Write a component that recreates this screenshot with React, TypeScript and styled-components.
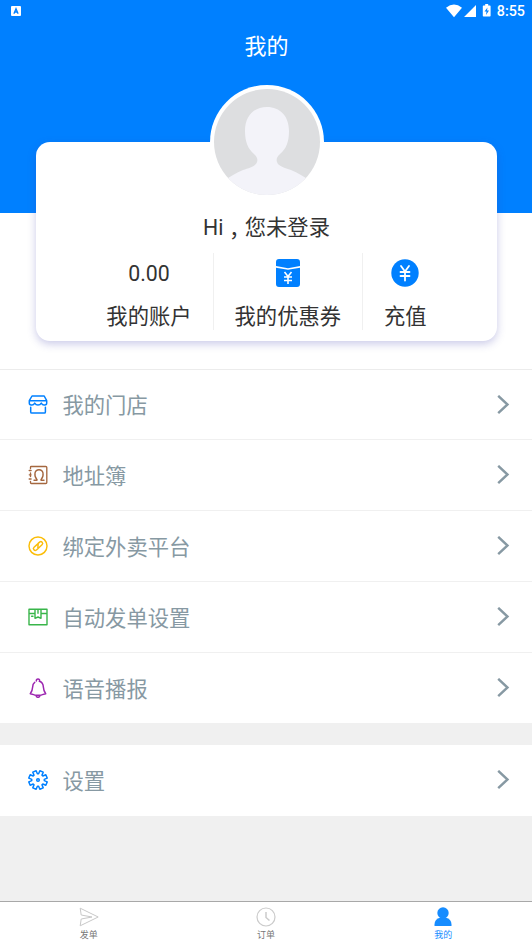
import React from "react";
import styled, { createGlobalStyle } from "styled-components";

const BLUE = "#0080ff";

const GlobalStyle = createGlobalStyle`
  * { box-sizing: border-box; }
  body {
    margin: 0;
    background: #f0f0f0;
    font-family: Roboto, "Noto Sans CJK SC", sans-serif;
  }
  svg { display: block; flex: none; }
`;

const Screen = styled.div`
  display: flex;
  flex-direction: column;
  width: 532px;
  height: 946px;
  overflow: hidden;
  background: #f0f0f0;
`;

const Header = styled.header`
  flex: none;
  height: 369px;
  background: linear-gradient(${BLUE} 213px, #fff 213px);
`;

const StatusBar = styled.div`
  display: flex;
  align-items: center;
  height: 22px;
  padding: 0 7px 0 11px;
`;

const StatusIcons = styled.div`
  display: flex;
  align-items: center;
  margin-left: auto;
`;

const Clock = styled.span`
  margin-left: 5px;
  font-size: 14.3px;
  font-weight: 500;
  line-height: 22px;
  color: #fff;
`;

const Title = styled.h1`
  margin: 0;
  height: 63px;
  padding: 9px 0 0 1px;
  font-size: 22px;
  font-weight: 400;
  line-height: 32px;
  text-align: center;
  color: #fff;
`;

const ProfileCard = styled.section`
  display: flex;
  flex-direction: column;
  align-items: center;
  width: 461px;
  height: 199px;
  margin: 57px 0 0 36px;
  border-radius: 14px;
  background: #fff;
  box-shadow: 0 3px 9px rgba(60, 60, 170, 0.27);
  color: #333;
`;

const Avatar = styled.div`
  flex: none;
  width: 114px;
  height: 114px;
  margin-top: -57px;
  padding: 4px;
  border-radius: 50%;
  background: #fff;
`;

const Greeting = styled.div`
  display: flex;
  margin-top: 13px;
  height: 32px;
  font-size: 21.3px;
  line-height: 32px;
  white-space: nowrap;
`;

const Comma = styled.span`
  padding-top: 6px;
  font-family: "Noto Sans CJK TC", sans-serif;
`;

const Stats = styled.div`
  display: flex;
  margin-top: 9px;
  height: 77px;
`;

const Stat = styled.div`
  display: flex;
  flex-direction: column;
  align-items: center;
  padding: 0 21px;
  & + & { border-left: 1px solid #f0f0f0; }
`;

const StatValue = styled.div`
  display: flex;
  flex: none;
  align-items: center;
  height: 39px;
  padding-top: 1px;
  font-size: 21.3px;
`;

const StatLabel = styled.div`
  flex: none;
  height: 32px;
  margin-top: 9px;
  font-size: 21.3px;
  line-height: 32px;
  white-space: nowrap;
`;

const Menu = styled.nav`
  flex: none;
  background: #fff;
  border-top: 1px solid #ececec;
  & + & { margin-top: 21px; border-top: 0; }
`;

const MenuRow = styled.div<{ $compact?: boolean; $last?: boolean }>`
  display: flex;
  align-items: center;
  height: ${(p) => (p.$compact ? 70 : 71)}px;
  padding: 0 22px 0 28px;
  border-bottom: 1px solid ${(p) => (p.$last ? "transparent" : "#f0f0f0")};
`;

const MenuLabel = styled.span`
  flex: 1;
  margin-left: 14.5px;
  padding-top: 3px;
  font-size: 21.3px;
  line-height: 32px;
  color: #8799a3;
`;

const TabBar = styled.footer`
  display: flex;
  flex: none;
  height: 45px;
  margin-top: auto;
  border-top: 1px solid #a8a8a8;
  background: #fff;
`;

const Tab = styled.div<{ $active?: boolean }>`
  display: flex;
  flex: 1;
  flex-direction: column;
  align-items: center;
  padding-top: 5px;
  font-size: 9px;
  line-height: 14px;
  color: ${(p) => (p.$active ? "#168cff" : "#777")};
`;

const TabLabel = styled.span`
  margin-top: 1px;
`;

function Glyph({ color, children, width = 1.35 }: { color: string; children: React.ReactNode; width?: number }) {
  return (
    <svg width="20" height="20" viewBox="0 0 20 20" fill="none" stroke={color} strokeWidth={width} strokeLinecap="round" strokeLinejoin="round">
      {children}
    </svg>
  );
}

const StoreIcon = () => (
  <Glyph color={BLUE} width={1.5}>
    <path d="M4 1h12.2l2.500 4.700H1.300zM1.300 5.700v2.200a2 2 0 0 0 1.900 2M18.700 5.700v2.200a2 2 0 0 1-1.900 2M3.200 9.900q2.200.5 3.500-1.800 1.200 2 3.300 2t3.300-2q1.300 2.300 3.500 1.800M2.700 12.200v4.700q0 1.100 1.100 1.100h12.500q1.100 0 1.100-1.100v-4.700" />
  </Glyph>
);

const AddressIcon = () => (
  <Glyph color="#a5673f" width={1.35}>
    <path d="M2.500 3.500V2.300q0-.8.800-.8h14.400q1.100 0 1.100 1.100v14.800q0 1.100-1.100 1.100H3.300q-.8 0-.8-.8v-1.200M1.200 5.500h1.900M1.200 14h1.900M2.500 8v3.500M1.300 9.800h1.800M6 15.200h2.800q.5 0 .2-.6c-2-2.100-2.400-4.300-2-6.600C7.400 6 8.900 4.700 11 4.700s3.600 1.300 4 3.300c.4 2.300 0 4.500-2 6.600q-.3.600.2.600H16" />
  </Glyph>
);

const LinkIcon = () => (
  <Glyph color="#fbbd08" width={1.45}>
    <circle cx="10" cy="10" r="9" />
    <g transform="rotate(-42 10 10)">
      <path d="M10.500 8.300H6.200a1.800 1.800 0 0 0 0 3.600h2.300M9.500 11.800h4.300a1.800 1.800 0 0 0 0-3.600h-2.300M8.700 11.200l2.600-2.400" />
    </g>
  </Glyph>
);

const PackageIcon = () => (
  <Glyph color="#39b54a" width={1.4}>
    <path d="M1 2.300h18v15.400H1zM1 6.500h6M13 6.500h6M7 2.300v9l3-1.300 3 1.300v-9M10 2.300v4M3.600 9.300h1.400" />
  </Glyph>
);

const BellIcon = () => (
  <Glyph color="#9c26b0" width={1.5}>
    <path d="M6.700 4.400C5 5.500 4.700 7.300 4.600 9.300c-.1 2.500-1 4.700-2.300 6.400l4.200 1.200q3.500.8 7 0l4.200-1.200c-1.300-1.700-2.200-3.900-2.300-6.400-.2-3.500-1.700-5.400-4-6M8.300 3q0-2 1.700-2t1.700 2M8 17.300q.3 2 2 2t2-2" />
  </Glyph>
);

const point = (radius: number, degrees: number) => {
  const a = (degrees * Math.PI) / 180;
  return `${(10 + radius * Math.cos(a)).toFixed(2)},${(10 + radius * Math.sin(a)).toFixed(2)}`;
};

const gearOutline = Array.from({ length: 8 }, (_, i) => {
  const mid = 22.5 + i * 45;
  return [point(6.3, mid - 17), point(9.4, mid - 11), point(9.4, mid + 11), point(6.3, mid + 17)].join(" ");
}).join(" ");

const GearIcon = () => (
  <Glyph color={BLUE} width={1.5}>
    <polygon points={gearOutline} />
    <circle cx="10" cy="10" r="1.3" />
  </Glyph>
);

const Chevron = () => (
  <svg width="13" height="20" viewBox="0 0 13 20" fill="none" stroke="#8799a3" strokeWidth="2.4">
    <path d="m1.200 .8 9.300 8.700-9.300 8.700" />
  </svg>
);

const Person = () => (
  <svg width="106" height="106" viewBox="0 0 106 106">
    <defs><clipPath id="portrait"><circle cx="53" cy="53" r="53" /></clipPath></defs>
    <g clipPath="url(#portrait)">
      <path fill="#dddee0" d="M0 0h106v106H0z" />
      <path fill="#f3f3f9" d="M53 18c13 0 22 9 22 24 0 11-3 18-9 23-3 3-4 5-3 8 1 4 8 6 14 8 7 3 12 6 19 11v14H10V92c7-5 12-8 19-11 6-2 13-4 14-8 1-3 0-5-3-8-6-5-9-12-9-23 0-15 9-24 22-24z" />
    </g>
  </svg>
);

const CouponIcon = () => (
  <svg width="24" height="28" viewBox="0 0 24 28">
    <path fill={BLUE} d="M3 0h18q3 0 3 3v4l-12 2.200L0 7V3q0-3 3-3zM0 8.700l12 2 12-2V25q0 3-3 3H3q-3 0-3-3z" />
    <path fill="none" stroke="#fff" strokeWidth="1.600" d="m8.500 13 3.500 4.500 3.500-4.500M12 17.500V25M8 18h8M8 21.500h8" />
  </svg>
);

const RechargeIcon = () => (
  <svg width="28" height="28" viewBox="0 0 28 28">
    <circle cx="14" cy="14" r="13.700" fill={BLUE} />
    <path fill="none" stroke="#fff" strokeWidth="1.800" strokeLinecap="round" d="m10 7 4 5.500L18 7M14 12.500v9M9.500 13h9M9.500 17h9" />
  </svg>
);

const menuItems = [
  { label: "我的门店", icon: <StoreIcon /> },
  { label: "地址簿", icon: <AddressIcon /> },
  { label: "绑定外卖平台", icon: <LinkIcon /> },
  { label: "自动发单设置", icon: <PackageIcon /> },
  { label: "语音播报", icon: <BellIcon /> },
];

export default function App() {
  return (
    <Screen>
      <GlobalStyle />
      <Header>
        <StatusBar>
          <svg width="10" height="10" viewBox="0 0 10 10">
            <rect width="10" height="10" rx="1" fill="#fff" />
            <path d="M2.900 7.800 5 2.800l2.100 5M3.800 6h2.400" fill="none" stroke={BLUE} strokeWidth="1.300" />
          </svg>
          <StatusIcons>
            <svg width="46" height="14" viewBox="0 0 46 14" fill="#fff">
              <path d="M0 3.800Q8-2.600 16 3.800L8 13.200zM30 1v12H18z" />
              <path d="M37.500 1.500h1.700V0h3v1.500h1.700q.7 0 .7.700v9.600q0 .7-.7.700h-6.400q-.7 0-.7-.7V2.200q0-.7.700-.7z" />
              <path fill={BLUE} d="m41.500 3.500-3 4h2L40 11l3-4.500h-2z" />
            </svg>
            <Clock>8:55</Clock>
          </StatusIcons>
        </StatusBar>
        <Title>我的</Title>
        <ProfileCard>
          <Avatar><Person /></Avatar>
          <Greeting><span>Hi</span><Comma>，</Comma><span>您未登录</span></Greeting>
          <Stats>
            <Stat><StatValue>0.00</StatValue><StatLabel>我的账户</StatLabel></Stat>
            <Stat><StatValue><CouponIcon /></StatValue><StatLabel>我的优惠券</StatLabel></Stat>
            <Stat><StatValue><RechargeIcon /></StatValue><StatLabel>充值</StatLabel></Stat>
          </Stats>
        </ProfileCard>
      </Header>
      <Menu>
        {menuItems.map((item, i) => (
          <MenuRow key={item.label} $compact={i === 0}>
            {item.icon}
            <MenuLabel>{item.label}</MenuLabel>
            <Chevron />
          </MenuRow>
        ))}
      </Menu>
      <Menu>
        <MenuRow $last>
          <GearIcon />
          <MenuLabel>设置</MenuLabel>
          <Chevron />
        </MenuRow>
      </Menu>
      <TabBar>
        <Tab>
          <svg width="20" height="20" viewBox="0 0 20 20" fill="none" stroke="#c8c8c8" strokeWidth="1">
            <path d="M1.200 1.200 19.200 10 1.200 18.800 2.200 12 13 10 2.200 8z" />
          </svg>
          <TabLabel>发单</TabLabel>
        </Tab>
        <Tab>
          <svg width="20" height="20" viewBox="0 0 20 20" fill="none" stroke="#cbcbcb" strokeWidth="1.200">
            <circle cx="10" cy="10" r="9" />
            <path d="M10 5v5.500l3.500 3" strokeWidth="1.500" />
          </svg>
          <TabLabel>订单</TabLabel>
        </Tab>
        <Tab $active>
          <svg width="20" height="20" viewBox="0 0 20 20" fill="#168cff">
            <circle cx="10" cy="6" r="5.700" />
            <path d="M1.500 19v-1.500q0-5.500 6-7h5q6 1.500 6 7V19z" />
          </svg>
          <TabLabel>我的</TabLabel>
        </Tab>
      </TabBar>
    </Screen>
  );
}
